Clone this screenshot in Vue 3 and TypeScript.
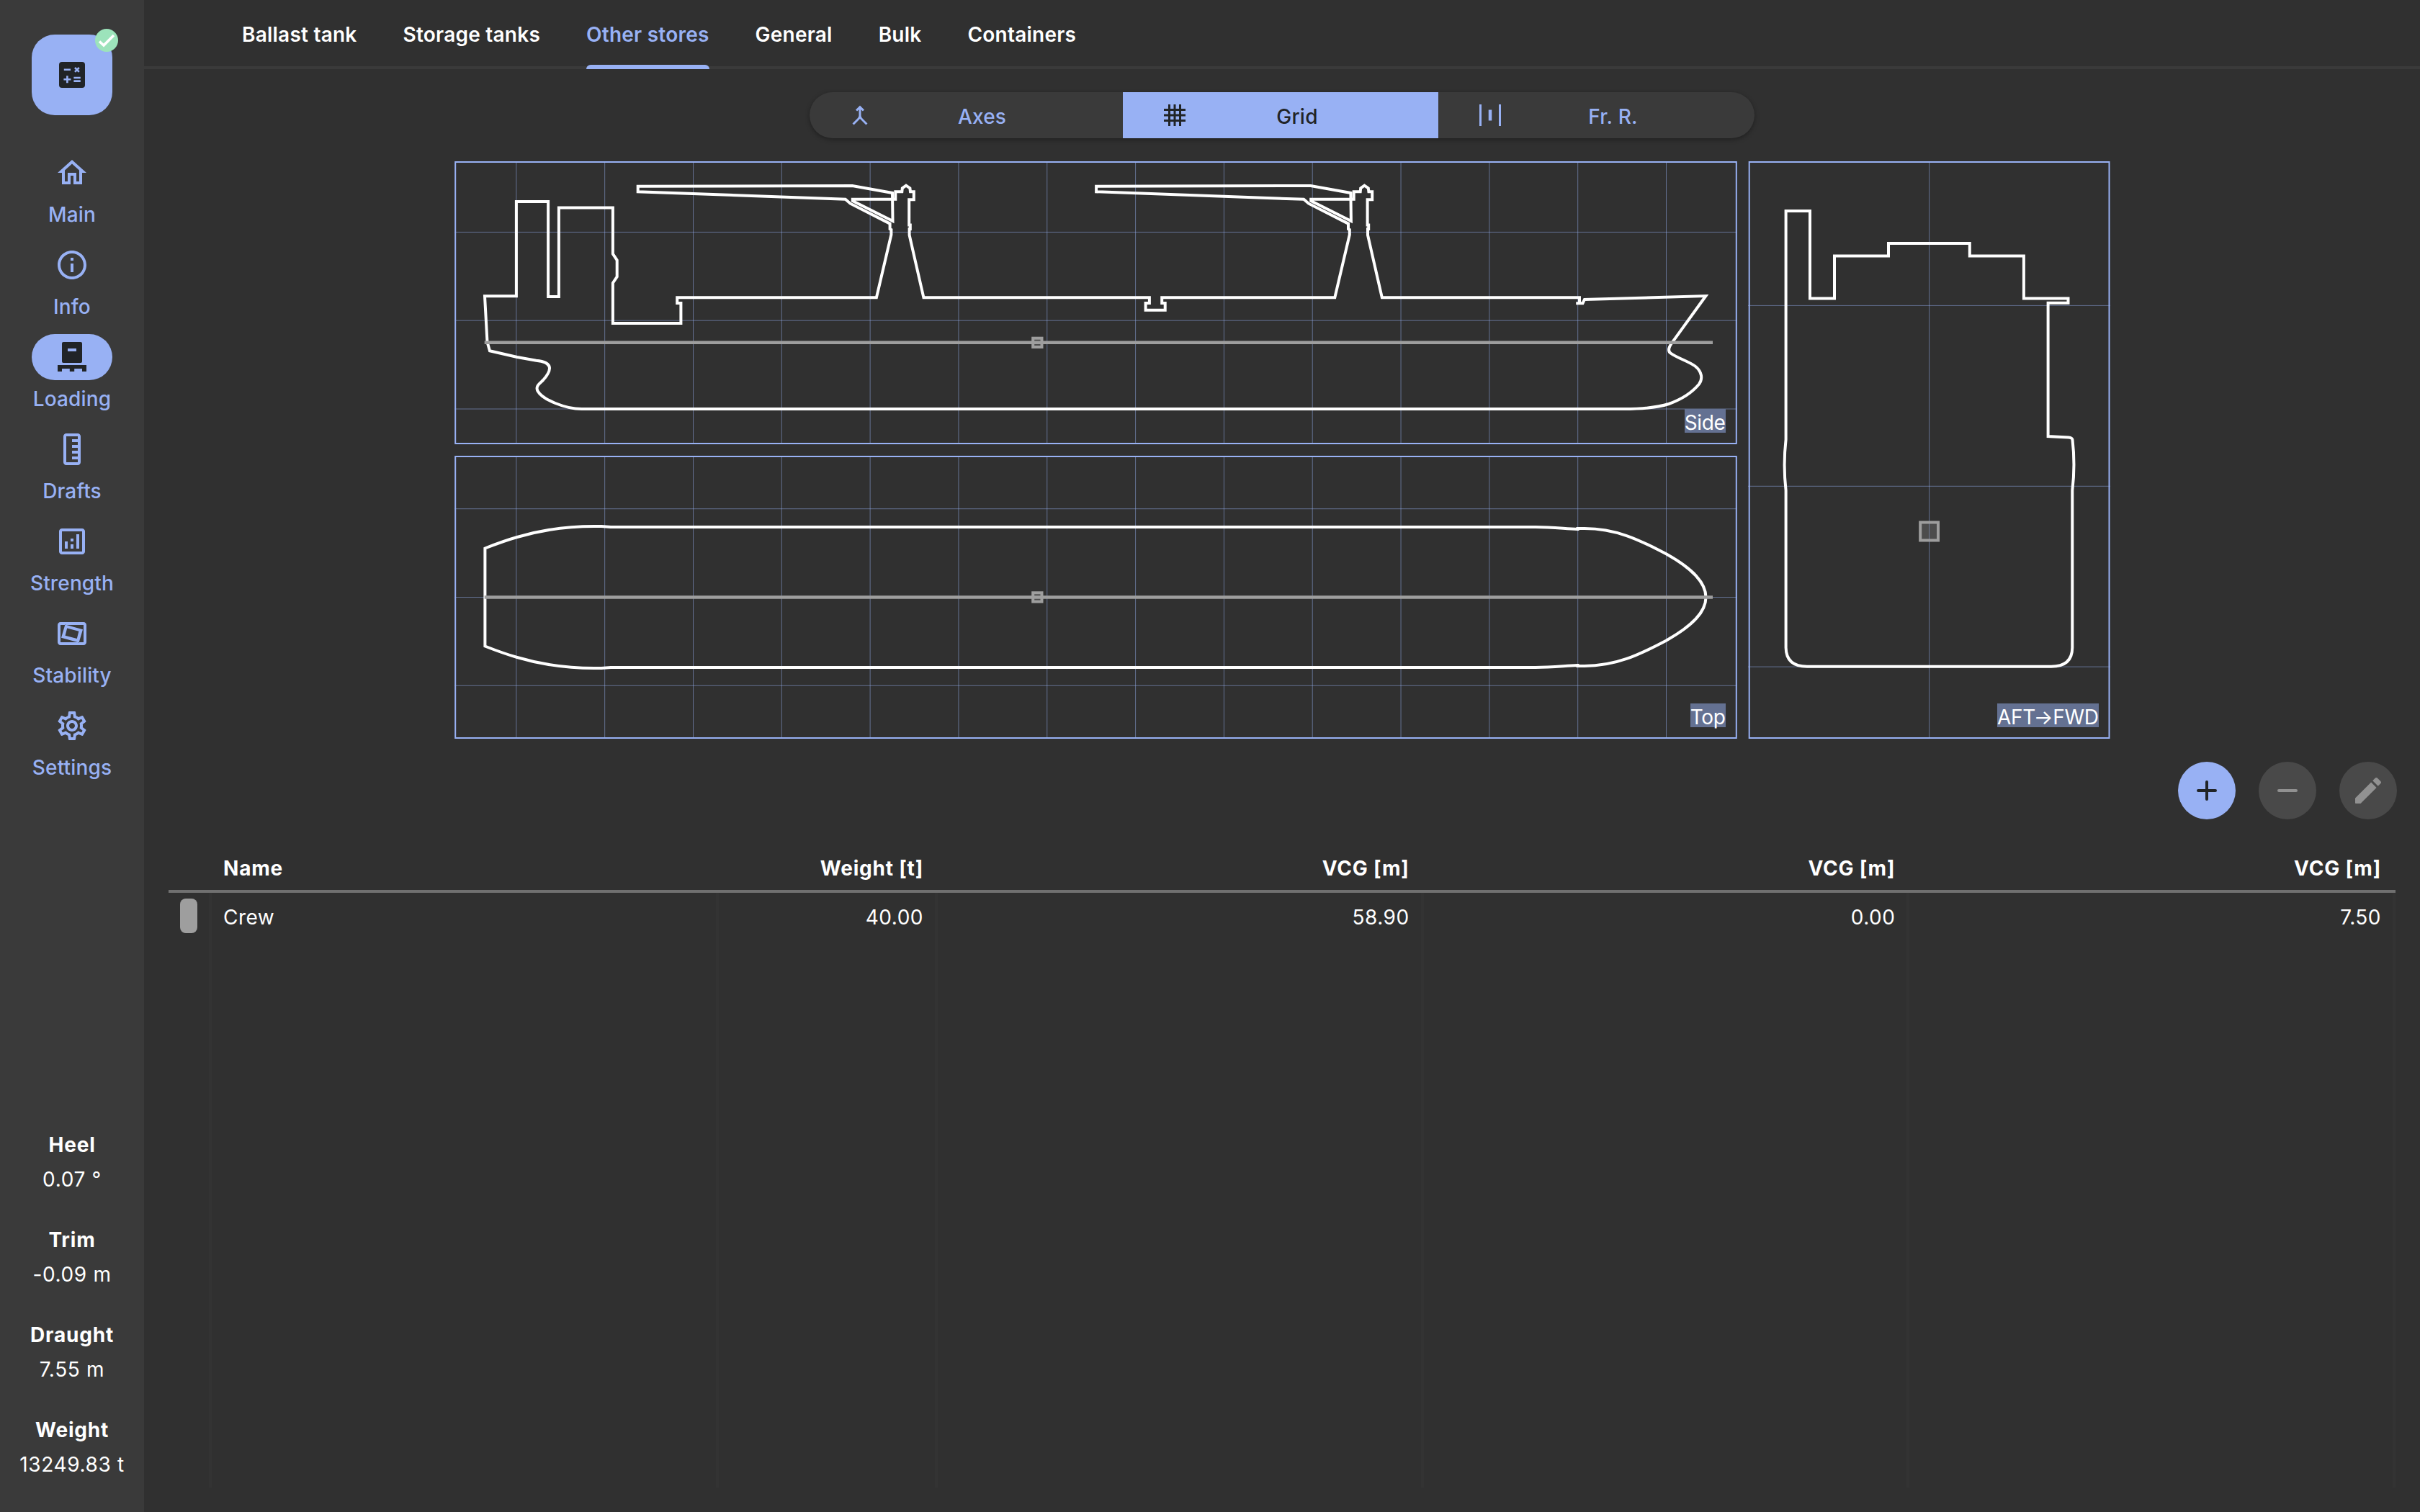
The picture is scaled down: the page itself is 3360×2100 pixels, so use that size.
<script setup lang="ts">
interface NavItem { label: string; icon: string; rotate?: boolean }
interface Stat { title: string; value: string }

const navItems: NavItem[] = [
  { label: 'Main', icon: 'M12 5.69l5 4.5V18h-2v-6H9v6H7v-7.81l5-4.5M12 3L2 12h3v8h6v-6h2v6h6v-8h3L12 3z' },
  { label: 'Info', icon: 'M11 7h2v2h-2zm0 4h2v6h-2zm1-9C6.48 2 2 6.48 2 12s4.480 10 10 10 10-4.480 10-10S17.520 2 12 2zm0 18c-4.410 0-8-3.590-8-8s3.590-8 8-8 8 3.590 8 8-3.590 8-8 8z' },
  { label: 'Loading', icon: 'M2 22v-4.500h20V22h-3v-2h-5.400v2h-3.200v-2H5v2zM6 16q-1 0-1-1V2.500q0-1 1-1h12q1 0 1 1V15q0 1-1 1zM9 8h6V6H9z' },
  { label: 'Drafts', rotate: true, icon: 'M21 6H3c-1.100 0-2 .9-2 2v8c0 1.100.9 2 2 2h18c1.100 0 2-.9 2-2V8c0-1.100-.9-2-2-2zm0 10H3V8h2v4h2V8h2v4h2V8h2v4h2V8h2v4h2V8h2v8z' },
  { label: 'Strength', icon: 'M19 3H5c-1.100 0-2 .9-2 2v14c0 1.100.9 2 2 2h14c1.100 0 2-.9 2-2V5c0-1.100-.9-2-2-2zm0 16H5V5h14v14zM7 12h2v5H7zm8-5h2v10h-2zm-4 7h2v3h-2zm0-4h2v2h-2z' },
  { label: 'Stability', icon: 'M20 4H4c-1.100 0-2 .9-2 2v12c0 1.100.9 2 2 2h16c1.100 0 2-.9 2-2V6c0-1.100-.9-2-2-2zm0 14H4V6h16zM7.200 5.700L4.500 14.900 16.800 18.200 19.500 9.100zM8.600 8.300L16.700 10.400 15.400 15.500 7.300 13.400z' },
  { label: 'Settings', icon: 'M19.43 12.98c.04-.32.07-.64.07-.98 0-.34-.03-.66-.07-.98l2.11-1.65c.19-.15.24-.42.12-.64l-2-3.460c-.09-.16-.26-.25-.44-.25-.06 0-.12.01-.17.03l-2.490 1c-.52-.4-1.080-.73-1.690-.98l-.38-2.650C14.460 2.180 14.250 2 14 2h-4c-.25 0-.46.18-.49.42l-.38 2.650c-.61.25-1.170.59-1.690.98l-2.490-1c-.06-.02-.12-.03-.18-.03-.17 0-.34.09-.43.25l-2 3.460c-.13.22-.07.49.12.64l2.110 1.650c-.04.32-.07.65-.07.98 0 .33.03.66.07.98l-2.110 1.650c-.19.15-.24.42-.12.64l2 3.460c.09.16.26.25.44.25.06 0 .12-.01.17-.03l2.490-1c.52.4 1.080.73 1.690.98l.38 2.650c.03.24.24.42.49.42h4c.25 0 .46-.18.49-.42l.38-2.650c.61-.25 1.170-.59 1.690-.98l2.490 1c.06.02.12.03.18.03.17 0 .34-.09.43-.25l2-3.460c.12-.22.07-.49-.12-.64l-2.110-1.650zm-1.980-1.710c.04.31.05.52.05.73 0 .21-.02.43-.05.73l-.14 1.130.89.7 1.080.84-.7 1.210-1.270-.51-1.040-.42-.9.68c-.43.32-.84.56-1.250.73l-1.060.43-.16 1.130-.2 1.350h-1.400l-.19-1.350-.16-1.130-1.060-.43c-.43-.18-.83-.41-1.230-.71l-.91-.7-1.060.43-1.270.51-.7-1.210 1.080-.84.89-.7-.14-1.130c-.03-.31-.05-.54-.05-.74s.02-.43.05-.73l.14-1.130-.89-.7-1.080-.84.7-1.210 1.270.51 1.040.42.9-.68c.43-.32.84-.56 1.250-.73l1.060-.43.16-1.130.2-1.350h1.390l.19 1.350.16 1.130 1.060.43c.43.18.83.41 1.230.71l.91.7 1.060-.43 1.270-.51.7 1.210-1.070.85-.89.7.14 1.130zM12 8c-2.210 0-4 1.790-4 4s1.790 4 4 4 4-1.790 4-4-1.790-4-4-4zm0 6c-1.100 0-2-.9-2-2s.9-2 2-2 2 .9 2 2-.9 2-2 2z' },
]
const activeNav = 'Loading'

const stats: Stat[] = [
  { title: 'Heel', value: '0.07 °' },
  { title: 'Trim', value: '-0.09 m' },
  { title: 'Draught', value: '7.55 m' },
  { title: 'Weight', value: '13249.83 t' },
]

const tabs = ['Ballast tank', 'Storage tanks', 'Other stores', 'General', 'Bulk', 'Containers']
const activeTab = 'Other stores'

const segments = [
  { label: 'Axes', icon: 'M6.410 21L5 19.590l4.830-4.830c.75-.75 1.170-1.770 1.170-2.830v-5.100L9.410 8.410 8 7l4-4 4 4-1.410 1.410L13 6.830v5.100c0 1.060.42 2.080 1.170 2.830L19 19.590 17.590 21 12 15.410 6.410 21z' },
  { label: 'Grid', icon: 'M22 6h-4V2h-2v4h-3V2h-2v4H8V2H6v4H2v2h4v3H2v2h4v3H2v2h4v4h2v-4h3v4h2v-4h3v4h2v-4h4v-2h-4v-3h4v-2h-4V8h4V6zM8 8h3v3H8V8zm0 8v-3h3v3H8zm8 0h-3v-3h3v3zm-3-5V8h3v3h-3z' },
  { label: 'Fr. R.', icon: 'M4 22H2V2h2v20zM22 2h-2v20h2V2zM13.500 7h-3v10h3V7z' },
]
const activeSegment = 'Grid'

const columns = ['', 'Name', 'Weight [t]', 'VCG [m]', 'VCG [m]', 'VCG [m]']
const row = ['', 'Crew', '40.00', '58.90', '0.00', '7.50']

// Grid spacing is ten metres in the long views
const longGridX = Array.from({ length: 14 }, (_, i) => 716.85 + i * 122.82)
const sideGridY = [322.4, 445.2, 568]
const topGridY = [706.7, 829.5, 952.3]
const bodyGridY = [424.4, 675.3, 926.1]

// One crane with its boom, starting and ending on deck level
const crane = (dx: number): string =>
  [
    [1216.9, 413.3], [1237.4, 326], [1237.4, 319], [1235.6, 318], [1235.6, 310.6], [1180.6, 282.7], [1173.8, 276.8],
    [885.7, 266.3], [885.7, 258.7], [1183.4, 258], [1239, 268], [1239.5, 307], [1183.8, 279], [1183.8, 276.7],
    [1243.3, 276.7], [1243.3, 266.2], [1252.3, 266.2], [1252.8, 261.3], [1258, 257.7], [1263.4, 261.3], [1264, 266.2],
    [1268.8, 266.2], [1268.8, 277.3], [1262.2, 277.3], [1262.2, 312.5], [1263.8, 312.5], [1263.8, 318], [1262.6, 318],
    [1262.6, 326.5], [1282.4, 413.3],
  ].map(([x, y]) => `L${(x + dx).toFixed(1)} ${y}`).join(' ')

const sideHull = `M807.500 568 C785 568 753 555 746.500 543 C743 536 750 532 754 528 C759 522.500 763 517 763 511.500 C763 504 755 501.800 744.500 500.700 L718 496 L680 487.300 L676.500 475 L673 411.200 H716.900 V280 H761.100 V412 H775.900 V288.500 H850.900 V352.700 L856.700 361.300 V384.300 L850.900 393 V449 H945.400 V421 H940.200 V413.300 ${crane(0)} H1595.900 V421 H1590.600 V430.700 H1617.700 V421 H1613.200 V413.300 ${crane(636.4)} H2193 V421.200 H2188.200 H2197.500 L2200 416 L2368.400 411 L2321 476.700 C2316.500 483 2315.500 487.500 2319.500 490.500 C2329 497.500 2344 501.500 2353.500 508.500 C2363 516 2364.500 526 2359 533.500 C2350 544.500 2335 554.500 2317 561 C2298 567 2275 568 2254.700 568 Z`

const topHull = 'M673.400 761.500 C690 755 702 750.500 718 746 C757 734.500 793 730 835 731 L848 732 H2132 C2155 732 2170 734 2190.500 735 V734 H2200 C2243 734 2275 749 2313.300 769.300 C2352 791 2368.500 810 2368.500 829.500 C2368.500 849 2352 868 2313.300 889.700 C2275 910 2243 925 2200 925 H2190.500 V924 C2170 925 2155 927 2132 927 H848 L835 928 C793 929 757 924.500 718 913 C702 908.500 690 904 673.400 897.500 Z'

const bodyHull = 'M2479.600 899.500 V681 Q2475.600 646 2479.600 610.500 V293.100 H2513 V414.400 H2547 V355.600 H2622 V338.100 H2734.800 V355.600 H2809.900 V414.400 H2871.500 V420.700 H2843.600 V606 L2872 607.500 Q2877.200 608 2877.500 611 Q2881.500 646 2877.300 681 V899.500 Q2877 925.700 2848 925.700 H2509 Q2480 925.700 2479.600 899.500 Z'
</script>

<template>
  <div class="app">
    <aside class="rail">
      <div class="fab">
        <svg class="icon" viewBox="0 0 24 24">
          <rect x="3" y="3" width="18" height="18" rx="2" class="ink" />
          <path d="M6.400 8.400H11M14 7l2.900 2.900M16.900 7L14 9.900M6.200 15.100H11.200M8.700 12.600V17.600M13.200 14H17.900M13.200 16.300H17.900" class="cut" />
        </svg>
        <span class="badge">
          <svg viewBox="0 0 32 32"><path d="M6 17.500L12 23L26 9" /></svg>
        </span>
      </div>
      <nav class="nav">
        <div v-for="item in navItems" :key="item.label" class="nav-item" :class="{ active: item.label === activeNav }">
          <div class="pill">
            <svg class="icon" :class="{ turned: item.rotate }" viewBox="0 0 24 24"><path fill-rule="evenodd" :d="item.icon" /></svg>
          </div>
          <div class="nav-label">{{ item.label }}</div>
        </div>
      </nav>
      <div class="stats">
        <div v-for="s in stats" :key="s.title" class="stat">
          <div class="stat-title">{{ s.title }}</div>
          <div class="stat-value">{{ s.value }}</div>
        </div>
      </div>
    </aside>

    <main class="main">
      <header class="tabs">
        <div v-for="t in tabs" :key="t" class="tab" :class="{ active: t === activeTab }">{{ t }}</div>
      </header>

      <div class="segments">
        <div v-for="s in segments" :key="s.label" class="segment" :class="{ active: s.label === activeSegment }">
          <svg viewBox="0 0 24 24"><path fill-rule="evenodd" :d="s.icon" /></svg>
          <span>{{ s.label }}</span>
        </div>
      </div>

      <section class="views">
        <div class="long-views">
          <div class="view">
            <svg viewBox="631 224 1781 393">
              <path v-for="x in longGridX" :key="x" class="grid" :d="`M${x} 224V617`" />
              <path v-for="y in sideGridY" :key="y" class="grid" :d="`M631 ${y}H2412`" />
              <path class="hull" :d="sideHull" />
              <path class="store-line" d="M672.700 475.800H2378" />
              <rect class="store" x="1434.200" y="469.700" width="12.300" height="12.300" />
              <rect class="frame" x="632.200" y="225" width="1778.600" height="391" />
            </svg>
            <span class="view-label">Side</span>
          </div>
          <div class="view">
            <svg viewBox="631 633 1781 393">
              <path v-for="x in longGridX" :key="x" class="grid" :d="`M${x} 633V1026`" />
              <path v-for="y in topGridY" :key="y" class="grid" :d="`M631 ${y}H2412`" />
              <path class="hull" :d="topHull" />
              <path class="store-line" d="M672.700 829.500H2378" />
              <rect class="store" x="1434.200" y="823.300" width="12.300" height="12.300" />
              <rect class="frame" x="632.200" y="634" width="1778.600" height="391" />
            </svg>
            <span class="view-label">Top</span>
          </div>
        </div>
        <div class="view body-view">
          <svg viewBox="2427 224 503 802">
            <path class="grid" d="M2678.600 224V1026" />
            <path v-for="y in bodyGridY" :key="y" class="grid" :d="`M2427 ${y}H2930`" />
            <path class="hull" :d="bodyHull" />
            <rect class="store" x="2666.200" y="725.500" width="24.800" height="25" />
            <rect class="frame" x="2428.700" y="225" width="499.800" height="800" />
          </svg>
          <span class="view-label">AFT→FWD</span>
        </div>
      </section>

      <div class="actions">
        <button class="round primary"><svg class="icon" viewBox="0 0 24 24"><path class="line" d="M6 12H18M12 6V18" /></svg></button>
        <button class="round"><svg class="icon" viewBox="0 0 24 24"><path class="line" d="M6 12H18" /></svg></button>
        <button class="round"><svg class="icon" viewBox="0 0 24 24"><path d="M3 17.460v3.040c0 .28.22.5.5.5h3.040c.13 0 .26-.05.35-.15L17.810 9.940l-3.750-3.750L3.150 17.100c-.1.1-.15.22-.15.36zM20.710 7.040c.39-.39.39-1.020 0-1.410l-2.340-2.340c-.39-.39-1.020-.39-1.410 0l-1.830 1.830 3.750 3.750 1.830-1.830z" /></svg></button>
      </div>

      <section class="table">
        <div class="thead">
          <div v-for="(c, i) in columns" :key="i" class="th" :class="{ num: i > 1 }">{{ c }}</div>
        </div>
        <div class="tbody">
          <div v-for="(v, i) in row" :key="i" class="col" :class="{ num: i > 1 }">
            <span v-if="i === 0" class="swatch"></span>
            <div v-else class="td">{{ v }}</div>
          </div>
        </div>
      </section>
    </main>
  </div>
</template>

<style>
body {
  margin: 0;
  background: #303030;
}
</style>

<style scoped>
.app {
  display: flex;
  width: 3360px;
  height: 2100px;
  overflow: hidden;
  background: #303030;
  color: #fff;
  font-family: Inter, "Liberation Sans", sans-serif;
  font-size: 28px;
  line-height: 40px;
  letter-spacing: 0.5px;
}
.icon {
  display: block;
  width: 48px;
  height: 48px;
  fill: currentColor;
}
.rail {
  display: flex;
  flex-direction: column;
  align-items: center;
  box-sizing: border-box;
  width: 200px;
  padding: 48px 0 46px;
  background: #3a3a3a;
}
.fab {
  position: relative;
  display: flex;
  align-items: center;
  justify-content: center;
  width: 112px;
  height: 112px;
  border-radius: 32px;
  background: #98b1f4;
}
.ink { fill: #212427; }
.cut {
  fill: none;
  stroke: #98b1f4;
  stroke-width: 1.3;
}
.badge {
  position: absolute;
  top: -8px;
  right: -8px;
  width: 32px;
  height: 32px;
  border-radius: 50%;
  background: #9ce3bb;
}
.badge svg {
  display: block;
  fill: none;
  stroke: #fff;
  stroke-width: 3.6;
}
.nav {
  display: flex;
  flex-direction: column;
  gap: 18px;
  margin-top: 48px;
  color: #98b1f4;
  font-weight: 500;
  letter-spacing: 0.15px;
}
.nav-item {
  display: flex;
  flex-direction: column;
  align-items: center;
  gap: 6px;
}
.pill {
  display: flex;
  align-items: center;
  justify-content: center;
  width: 112px;
  height: 64px;
  border-radius: 32px;
}
.active .pill {
  background: #98b1f4;
  color: #212427;
}
.turned { transform: rotate(90deg); }
.stats {
  display: flex;
  flex-direction: column;
  gap: 44px;
  margin-top: auto;
  text-align: center;
}
.stat {
  display: flex;
  flex-direction: column;
  gap: 8px;
}
.stat-title {
  font-weight: 700;
  letter-spacing: 0.8px;
}
.stat-value { letter-spacing: 0.65px; }
.main {
  display: flex;
  flex: 1;
  flex-direction: column;
  align-items: center;
  min-width: 0;
}
.tabs {
  display: flex;
  align-self: stretch;
  gap: 64px;
  box-sizing: border-box;
  height: 96px;
  padding-left: 136px;
  box-shadow: inset 0 -4px #3a3a3a;
  font-weight: 600;
  letter-spacing: 0.23px;
  line-height: 96px;
}
.tab { position: relative; }
.tab.active { color: #98b1f4; }
.tab.active::after {
  content: "";
  position: absolute;
  right: 0;
  bottom: 0;
  left: 0;
  height: 6px;
  border-radius: 6px 6px 0 0;
  background: #98b1f4;
}
.segments {
  display: grid;
  grid-template-columns: 435px 438px 439px;
  height: 64px;
  margin-top: 32px;
  overflow: hidden;
  border-radius: 32px;
  background: #3a3a3a;
  box-shadow: 0 2px 6px rgba(0, 0, 0, 0.35);
  color: #98b1f4;
  font-weight: 500;
}
.segment {
  display: flex;
  align-items: center;
  gap: 8px;
  padding: 0 52px 0 54px;
  letter-spacing: 0.2px;
}
.segment:first-child { padding: 0 52px; }
.segment svg {
  width: 36px;
  height: 36px;
  fill: currentColor;
}
.segment span {
  flex: 1;
  padding-top: 4px;
  text-align: center;
}
.segment.active {
  background: #98b1f4;
  color: #212427;
}
.views {
  display: flex;
  gap: 15px;
  margin-top: 32px;
}
.long-views {
  display: flex;
  flex-direction: column;
  gap: 16px;
  width: 1781px;
}
.view {
  position: relative;
  height: 393px;
}
.body-view {
  width: 503px;
  height: 802px;
}
.view svg {
  display: block;
  width: 100%;
  height: 100%;
}
.grid {
  stroke: #98b1f4;
  stroke-opacity: 0.5;
  stroke-width: 1;
}
.frame {
  fill: none;
  stroke: #98b1f4;
  stroke-width: 2;
}
.hull {
  fill: none;
  stroke: #fff;
  stroke-width: 4;
}
.store-line {
  stroke: #9e9e9e;
  stroke-width: 4.4;
}
.store {
  fill: rgba(158, 158, 158, 0.25);
  stroke: #9e9e9e;
  stroke-width: 4;
}
.view-label {
  position: absolute;
  right: 16px;
  bottom: 16px;
  height: 33px;
  background: #647192;
  letter-spacing: -0.35px;
  line-height: 39px;
}
.actions {
  display: flex;
  align-self: flex-end;
  gap: 32px;
  margin: 32px 32px 0 0;
}
.round {
  display: flex;
  align-items: center;
  justify-content: center;
  width: 80px;
  height: 80px;
  padding: 0;
  border: 0;
  border-radius: 50%;
  background: #494949;
  color: #919191;
}
.round.primary {
  background: #98b1f4;
  color: #212427;
}
.line {
  fill: none;
  stroke: currentColor;
  stroke-width: 2;
  stroke-linecap: round;
}
.table {
  display: flex;
  flex: 1;
  flex-direction: column;
  align-self: stretch;
  margin: 38px 34px 34px;
}
.thead,
.tbody {
  display: grid;
  grid-template-columns: 60px 704px 304px 1fr 1fr 1fr;
}
.thead {
  height: 60px;
  border-bottom: 4px solid #707070;
  font-weight: 700;
  letter-spacing: 0.8px;
  line-height: 60px;
}
.th {
  padding: 0 20px 0 16px;
}
.tbody { flex: 1; }
.col {
  border-right: 4px solid #333;
}
.td {
  padding: 0 16px;
  line-height: 68px;
}
.num { text-align: right; }
.swatch {
  display: block;
  width: 24px;
  height: 48px;
  margin: 8px 0 0 16px;
  border-radius: 8px;
  background: #9e9e9e;
}
</style>
